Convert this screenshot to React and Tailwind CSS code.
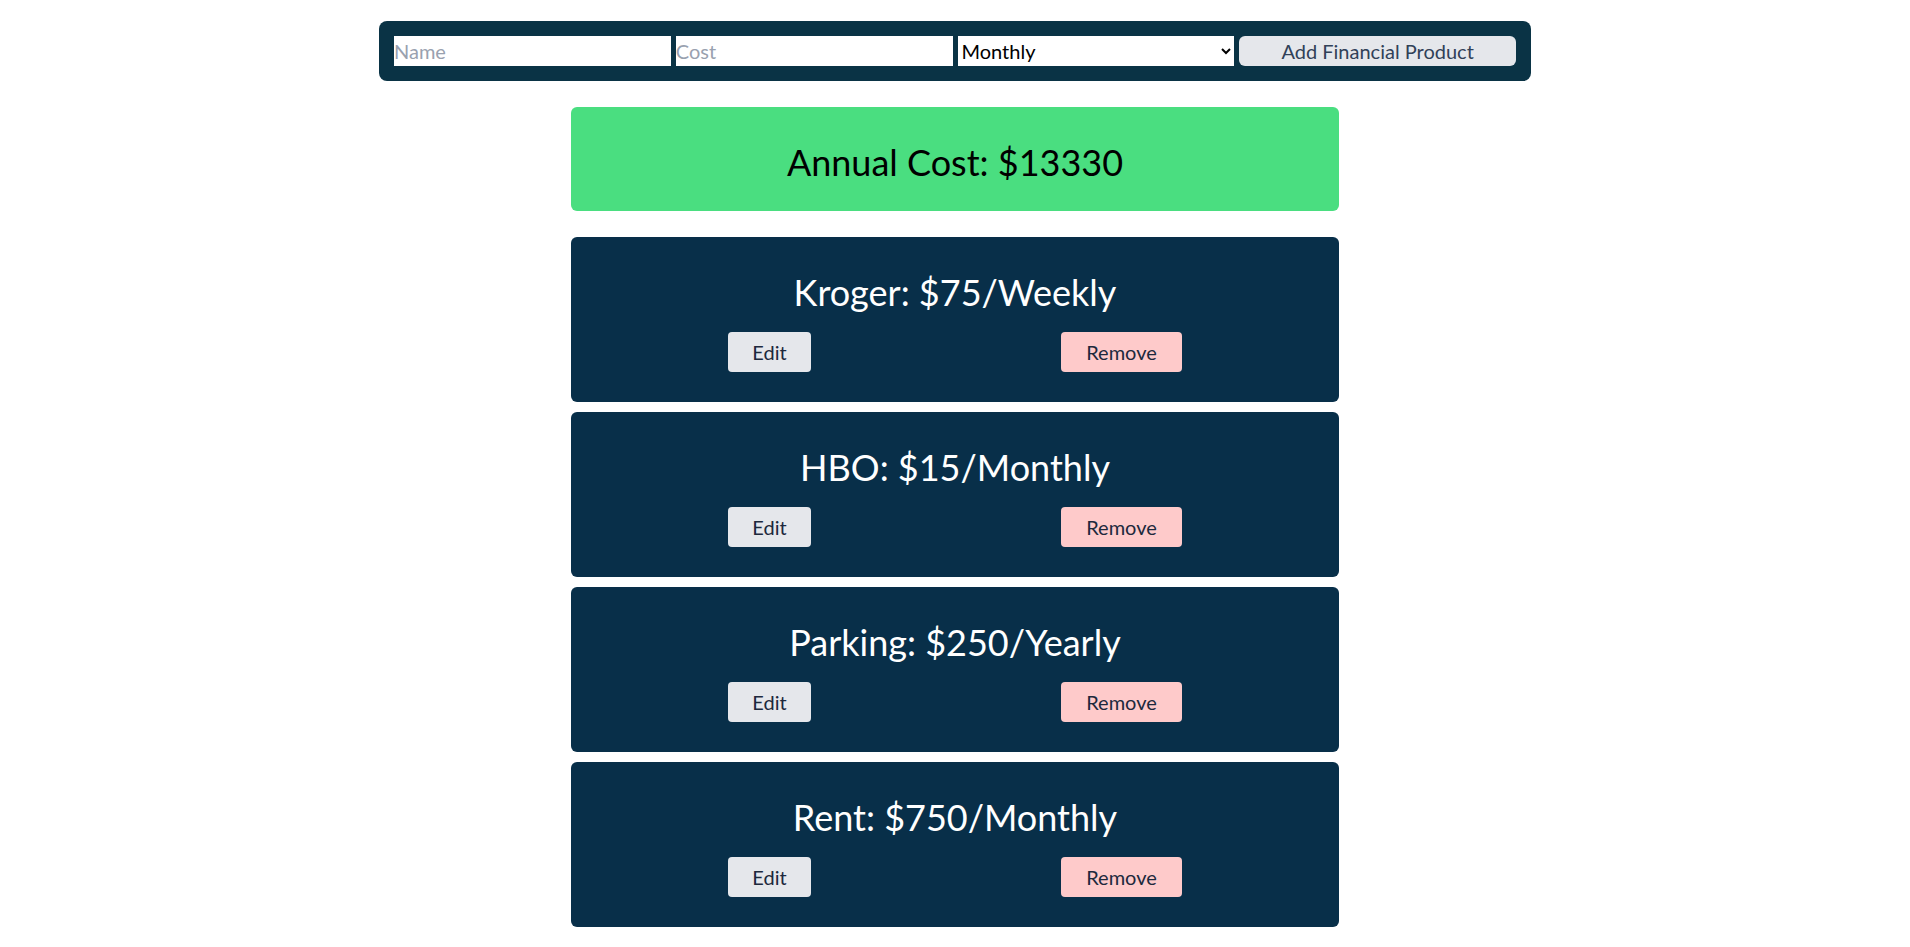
import React, { useState } from 'react';

const initialProducts = [
  { name: 'Kroger', cost: 75, frequency: 'Weekly' },
  { name: 'HBO', cost: 15, frequency: 'Monthly' },
  { name: 'Parking', cost: 250, frequency: 'Yearly' },
  { name: 'Rent', cost: 750, frequency: 'Monthly' },
];

const multiplier = { Weekly: 52, Monthly: 12, Yearly: 1 };

const ProductCard = ({ product }) => (
  <div className="bg-[#082f49] rounded-md pt-[35px] pb-[30px] text-center">
    <h2 className="text-4xl text-white mb-5">
      {product.name}: ${product.cost}/{product.frequency}
    </h2>
    <div className="flex justify-around px-8">
      <button className="bg-[#e5e7eb] text-slate-800 text-xl h-10 w-[83px] rounded-sm">Edit</button>
      <button className="bg-[#fecaca] text-slate-800 text-xl h-10 w-[121px] rounded-sm">Remove</button>
    </div>
  </div>
);

export default function App() {
  const [products] = useState(initialProducts);
  const annual = products.reduce((sum, p) => sum + p.cost * multiplier[p.frequency], 0);

  return (
    <div className="min-h-screen bg-white pt-[21px] pb-8" style={{ fontFamily: 'Lato, "Noto Sans", sans-serif' }}>
      {/* add form */}
      <div className="max-w-6xl mx-auto bg-[#0a3345] rounded-lg p-[15px] grid grid-cols-4 gap-[5px]">
        <input className="bg-white h-[30px] text-[20px] px-0 placeholder:text-gray-400 outline-none" placeholder="Name" />
        <input className="bg-white h-[30px] text-[20px] px-0 placeholder:text-gray-400 outline-none" placeholder="Cost" />
        <select className="bg-white h-[30px] text-[20px] text-black outline-none" defaultValue="Monthly">
          <option>Weekly</option>
          <option>Monthly</option>
          <option>Yearly</option>
        </select>
        <button className="bg-[#e5e7eb] h-[30px] text-[20px] text-slate-700 rounded-md">Add Financial Product</button>
      </div>

      <div className="max-w-3xl mx-auto mt-[26px]">
        <div className="bg-[#4ade80] rounded-md pt-[35px] pb-[29px] text-center text-4xl text-black">
          Annual Cost: ${annual}
        </div>
        <div className="mt-[26px] flex flex-col gap-[10px]">
          {products.map((p) => (
            <ProductCard key={p.name} product={p} />
          ))}
        </div>
      </div>
    </div>
  );
}
